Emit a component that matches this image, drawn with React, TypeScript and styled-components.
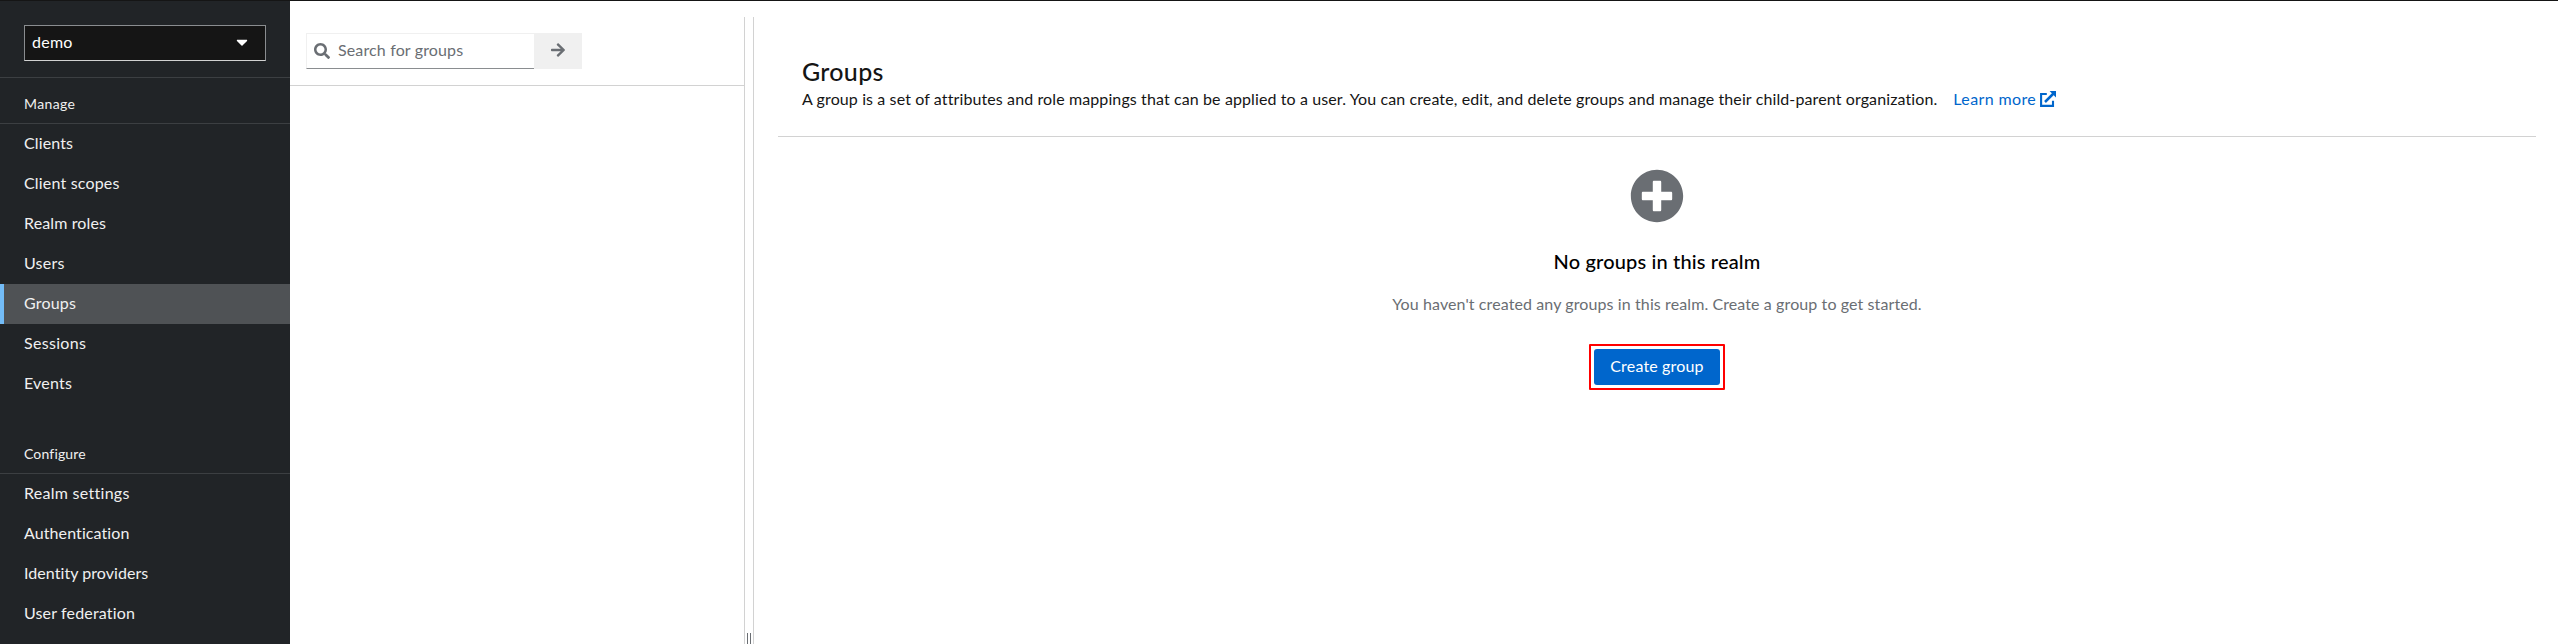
import React from 'react';
import styled, { createGlobalStyle, css } from 'styled-components';
import { FaSearch, FaArrowRight, FaPlusCircle, FaCaretDown } from 'react-icons/fa';

const GlobalStyle = createGlobalStyle`
  *, *::before, *::after { box-sizing: border-box; }
  body {
    margin: 0;
    background: #fff;
    color: #151515;
    font-family: Lato, Roboto, sans-serif;
    font-size: 16px;
    line-height: 24px;
  }
  h1, h2, p, ul { margin: 0; padding: 0; }
  button, input { font: inherit; }
`;

const Page = styled.div`
  display: flex;
  height: 644px;
  border-top: 1px solid #151515;
  overflow: hidden;
`;

const Tracked = styled.span<{ $tracking?: number }>`
  letter-spacing: ${({ $tracking = 0 }) => $tracking}px;
  white-space: nowrap;
`;

const Sidebar = styled.nav`
  flex: 0 0 290px;
  background: #212427;
  color: #f0f0f0;
`;

const RealmBar = styled.div`
  height: 77px;
  padding: 24px;
  border-bottom: 1px solid #3c3f42;
`;

const RealmSelect = styled.button`
  display: flex;
  align-items: center;
  justify-content: space-between;
  width: 242px;
  height: 36px;
  padding: 0 14px 2px 7px;
  border: 1px solid #8a8d90;
  border-bottom-color: #d2d2d2;
  background: #151515;
  color: #fff;
`;

const SectionTitle = styled.h2<{ $spaced?: boolean }>`
  margin-top: ${({ $spaced }) => ($spaced ? 24 : 0)}px;
  padding: 15px 24px 9px;
  border-bottom: 1px solid #3c3f42;
  font-size: 14px;
  font-weight: 400;
  line-height: 21px;
`;

const NavList = styled.ul`
  list-style: none;
`;

const NavItem = styled.li<{ $current?: boolean }>`
  height: 40px;
  padding: 7px 24px 9px;
  ${({ $current }) =>
    $current &&
    css`
      background: #4f5255;
      box-shadow: inset 4px 0 0 #73bcf7;
    `}
`;

const TreePanel = styled.aside`
  flex: 0 0 454px;
  padding-top: 16px;
`;

const TreeToolbar = styled.div`
  height: 69px;
  padding: 16px;
  border-bottom: 1px solid #d2d2d2;
  display: flex;
`;

const SearchBox = styled.label`
  display: flex;
  align-items: center;
  width: 228px;
  height: 36px;
  padding: 0 0 1px 7px;
  border: 1px solid #f0f0f0;
  border-right: 0;
  border-bottom-color: #8a8d90;
  color: #6a6e73;
`;

const SearchInput = styled.input`
  flex: 1;
  min-width: 0;
  padding: 0 0 2px 8px;
  border: 0;
  outline: 0;
  background: transparent;
  letter-spacing: 0.137px;
  &::placeholder { color: #6a6e73; opacity: 1; }
`;

const SearchButton = styled.button`
  display: flex;
  align-items: center;
  justify-content: center;
  width: 48px;
  height: 36px;
  padding: 0 0 2px;
  border: 0;
  background: #f0f0f0;
  color: #6a6e73;
`;

const Splitter = styled.div`
  flex: 0 0 10px;
  display: flex;
  justify-content: center;
  margin-top: 16px;
  padding-top: 616px;
  border: solid #d2d2d2;
  border-width: 0 1px;
`;

const Grip = styled.span`
  width: 4px;
  height: 16px;
  border: solid #6a6e73;
  border-width: 0 1px;
`;

const Main = styled.main`
  flex: 1;
  padding: 0 22px 0 24px;
`;

const Header = styled.header`
  height: 136px;
  padding: 54px 24px 0;
  border-bottom: 1px solid #d2d2d2;
`;

const Title = styled.h1`
  font-size: 25px;
  font-weight: 500;
  line-height: 32px;
`;

const Description = styled.p`
  display: flex;
`;

const LearnMore = styled.a`
  display: flex;
  align-items: flex-start;
  gap: 4px;
  margin-left: 16px;
  color: #06c;
`;

const LinkIcon = styled.svg`
  width: 16px;
  height: 16px;
  margin-top: 4px;
`;

const EmptyState = styled.section`
  display: flex;
  flex-direction: column;
  align-items: center;
  padding-top: 32px;
`;

const EmptyIcon = styled(FaPlusCircle)`
  width: 54px;
  height: 54px;
  color: #6a6e73;
`;

const EmptyTitle = styled.h2`
  margin-top: 23px;
  color: #000;
  font-size: 20px;
  font-weight: 500;
  line-height: 30px;
`;

const EmptyBody = styled.p`
  margin-top: 16px;
  color: #6a6e73;
`;

const Highlight = styled.div`
  margin-top: 28px;
  padding: 3px;
  border: 2px solid #f00;
  border-radius: 1px;
`;

const PrimaryButton = styled.button`
  display: block;
  width: 126px;
  height: 36px;
  padding: 0 0 2px;
  border: 0;
  border-radius: 3px;
  background: #06c;
  color: #fff;
`;

type Item = { label: string; tracking: number; current?: boolean };

const manage: Item[] = [
  { label: 'Clients', tracking: 0.116 },
  { label: 'Client scopes', tracking: 0.182 },
  { label: 'Realm roles', tracking: 0.127 },
  { label: 'Users', tracking: 0.241 },
  { label: 'Groups', tracking: 0.197, current: true },
  { label: 'Sessions', tracking: 0.318 },
  { label: 'Events', tracking: 0.219 },
];

const configure: Item[] = [
  { label: 'Realm settings', tracking: 0.278 },
  { label: 'Authentication', tracking: 0.096 },
  { label: 'Identity providers', tracking: 0.06 },
  { label: 'User federation', tracking: 0.154 },
];

const Nav = ({ items }: { items: Item[] }) => (
  <NavList>
    {items.map(({ label, tracking, current }) => (
      <NavItem key={label} $current={current}>
        <Tracked $tracking={tracking}>{label}</Tracked>
      </NavItem>
    ))}
  </NavList>
);

const ExternalLinkIcon = () => (
  <LinkIcon viewBox="0 0 16 16" fill="none" stroke="currentColor" aria-hidden="true">
    <path d="M6.8 3H1.1v11.9H13V9.8" strokeWidth="2.1" />
    <path d="M5 11l8.5-8.5" strokeWidth="2.5" />
    <path d="M9.6 0H16v6.4z" fill="currentColor" stroke="none" />
  </LinkIcon>
);

export default function App() {
  return (
    <>
      <GlobalStyle />
      <Page>
        <Sidebar>
          <RealmBar>
            <RealmSelect>
              <Tracked $tracking={0.25}>demo</Tracked>
              <FaCaretDown size={18} />
            </RealmSelect>
          </RealmBar>
          <SectionTitle><Tracked $tracking={0.363}>Manage</Tracked></SectionTitle>
          <Nav items={manage} />
          <SectionTitle $spaced><Tracked $tracking={0.155}>Configure</Tracked></SectionTitle>
          <Nav items={configure} />
        </Sidebar>
        <TreePanel>
          <TreeToolbar>
            <SearchBox>
              <FaSearch size={16} />
              <SearchInput placeholder="Search for groups" />
            </SearchBox>
            <SearchButton aria-label="Search"><FaArrowRight size={16} /></SearchButton>
          </TreeToolbar>
        </TreePanel>
        <Splitter><Grip /></Splitter>
        <Main>
          <Header>
            <Title><Tracked $tracking={0.3}>Groups</Tracked></Title>
            <Description>
              <Tracked $tracking={0.111}>
                A group is a set of attributes and role mappings that can be applied to a user. You can create, edit, and delete groups and manage their child-parent organization.
              </Tracked>
              <LearnMore>
                <Tracked $tracking={0.377}>Learn more</Tracked>
                <ExternalLinkIcon />
              </LearnMore>
            </Description>
          </Header>
          <EmptyState>
            <EmptyIcon />
            <EmptyTitle><Tracked $tracking={0.153}>No groups in this realm</Tracked></EmptyTitle>
            <EmptyBody>
              <Tracked $tracking={0.102}>You haven't created any groups in this realm. Create a group to get started.</Tracked>
            </EmptyBody>
            <Highlight>
              <PrimaryButton><Tracked $tracking={0.156}>Create group</Tracked></PrimaryButton>
            </Highlight>
          </EmptyState>
        </Main>
      </Page>
    </>
  );
}
